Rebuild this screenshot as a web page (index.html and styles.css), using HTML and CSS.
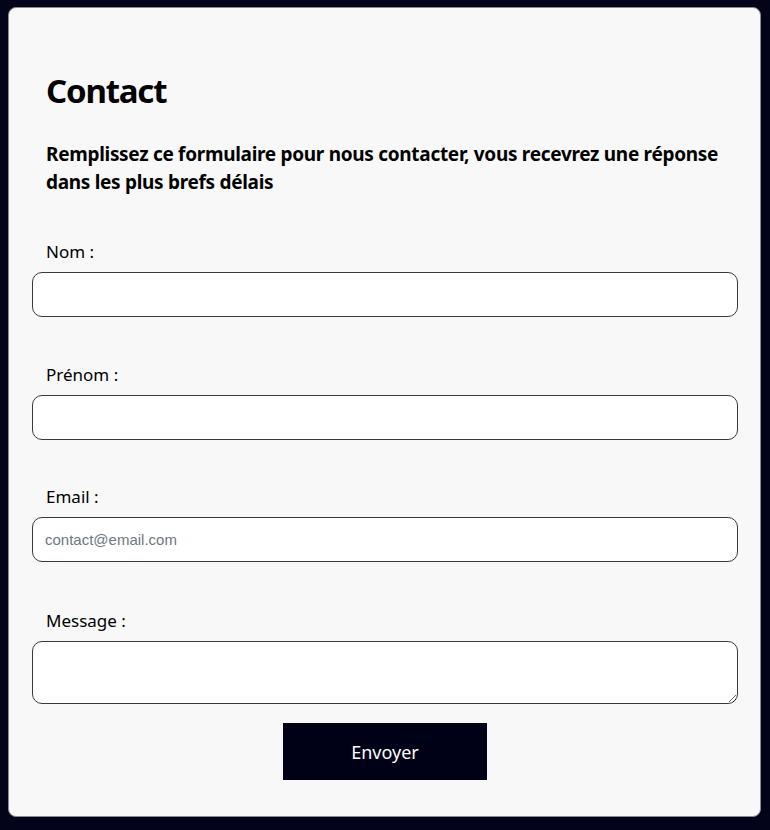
FILE: index.html
```html
<!DOCTYPE html>
<html lang="fr">
<head>
<meta charset="utf-8">
<title>Contact</title>
<link rel="stylesheet" href="styles.css">
</head>
<body>
<main class="card">
  <h1 class="title">Contact</h1>
  <p class="intro">Remplissez ce formulaire pour nous contacter, vous recevrez une réponse dans les plus brefs délais</p>
  <form class="form">
    <div class="field">
      <label class="label" for="nom">Nom :</label>
      <input class="input" id="nom" type="text">
    </div>
    <div class="field">
      <label class="label" for="prenom">Prénom :</label>
      <input class="input" id="prenom" type="text">
    </div>
    <div class="field">
      <label class="label" for="email">Email :</label>
      <input class="input" id="email" type="email" placeholder="contact@email.com">
    </div>
    <div class="field">
      <label class="label" for="message">Message :</label>
      <textarea class="input textarea" id="message"></textarea>
    </div>
    <div class="actions">
      <button class="button" type="submit">Envoyer</button>
    </div>
  </form>
</main>
</body>
</html>
```
FILE: styles.css
```css
html, body {
  margin: 0;
  padding: 0;
  background: #03041a;
}
body {
  padding: 7px 9px 13px 8px;
  font-family: "Noto Sans", "Liberation Sans", sans-serif;
  color: #000;
}
.card {
  box-sizing: border-box;
  height: 810px;
  background: #f8f8f8;
  border: 1px solid #8a8a8a;
  border-radius: 8px;
  padding: 60px 22px 0 23px;
}
.title {
  margin: 0 0 0 14px;
  font-size: 33px;
  line-height: 46px;
  font-weight: 700;
  letter-spacing: -1.2px;
}
.intro {
  margin: 26px 0 0 14px;
  font-size: 19px;
  line-height: 28px;
  font-weight: 700;
  letter-spacing: -0.3px;
}
.form {
  margin-top: 45px;
  display: flex;
  flex-direction: column;
}
.field {
  display: flex;
  flex-direction: column;
  margin-bottom: 47px;
}
.field:nth-child(2) {
  margin-bottom: 46px;
}
.field:nth-child(3) {
  margin-bottom: 48px;
}
.field:nth-child(4) {
  margin-bottom: 19px;
}
.label {
  margin-left: 14px;
  font-size: 17px;
  line-height: 22px;
  margin-bottom: 9px;
}
.input {
  box-sizing: border-box;
  height: 45px;
  width: 100%;
  border: 1px solid #3a3a3a;
  border-radius: 10px;
  background: #fff;
  padding: 0 12px;
  font-family: "Liberation Sans", Arial, sans-serif;
  font-size: 15px;
}
.input::placeholder {
  color: #6f7780;
}
.textarea {
  height: 63px;
  resize: vertical;
  padding: 8px 12px;
  display: block;
}
.actions {
  display: flex;
  justify-content: center;
}
.button {
  width: 204px;
  height: 57px;
  border: none;
  background: #000016;
  color: #fff;
  font-family: "Noto Sans", "Liberation Sans", sans-serif;
  font-size: 18px;
}
```
